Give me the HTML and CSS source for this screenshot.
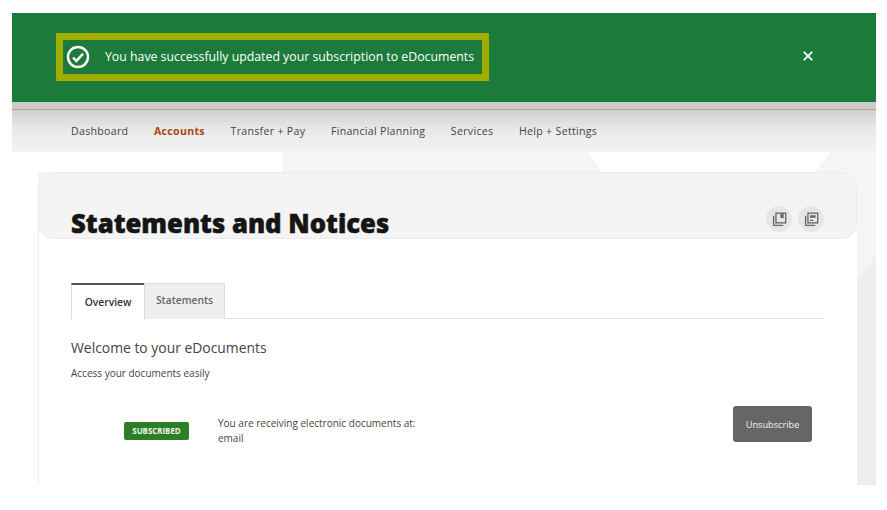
FILE: index.html
```html
<!DOCTYPE html>
<html lang="en">
<head>
  <meta charset="UTF-8" />
  <title>Statements and Notices</title>
  <link rel="stylesheet" href="styles.css">
</head>
<body>
  <div class="page">
    <div class="banner">
      <div class="banner-msg">
        <svg class="check-icon" viewBox="0 0 24 24" width="24" height="24" fill="none" stroke="#fff">
          <circle cx="12" cy="12" r="10" stroke-width="2.4" />
          <path d="M7 12.5l3.4 3.4L17 8.8" stroke-width="2.4" />
        </svg>
        <span>You have successfully updated your subscription to eDocuments</span>
      </div>
      <button class="banner-close" aria-label="Close">
        <svg viewBox="0 0 10 10" width="10" height="10" stroke="#fff" stroke-width="1.9">
          <path d="M.8.8l8.4 8.4M9.2.8L.8 9.2" />
        </svg>
      </button>
    </div>

    <nav class="nav">
      <a href="#">Dashboard</a>
      <a href="#" class="active">Accounts</a>
      <a href="#">Transfer + Pay</a>
      <a href="#">Financial Planning</a>
      <a href="#">Services</a>
      <a href="#">Help + Settings</a>
    </nav>

    <main class="content">
      <div class="decor decor-left"></div>
      <div class="decor decor-right"></div>
      <div class="decor decor-corner"></div>

      <section class="card">
        <div class="card-head">
          <h1>Statements and Notices</h1>
          <div class="head-icons">
            <span class="round-icon">
              <svg viewBox="0 0 16 16" width="15" height="15" fill="none" stroke="#666" stroke-width="1.4">
                <path d="M1.7 4v10.3H12" />
                <rect x="4.2" y="1.2" width="10.4" height="10.4" />
                <path d="M9 1.5v5h3.5v-5" fill="#666" stroke="none" />
              </svg>
            </span>
            <span class="round-icon">
              <svg viewBox="0 0 16 16" width="15" height="15" fill="none" stroke="#666" stroke-width="1.4">
                <path d="M1.7 4v10.3H12" />
                <rect x="4.2" y="1.2" width="10.4" height="10.4" />
                <path d="M6.4 3.4h6v2.6h-6zM6.4 8.3h3.4v1.2h-3.4z" fill="#666" stroke="none" />
              </svg>
            </span>
          </div>
        </div>

        <div class="card-body">
          <div class="tabs">
            <div class="tab tab-active">Overview</div>
            <div class="tab">Statements</div>
          </div>

          <h2>Welcome to your eDocuments</h2>
          <p class="sub">Access your documents easily</p>

          <div class="sub-row">
            <span class="badge">SUBSCRIBED</span>
            <p class="sub-text">You are receiving electronic documents at:<br>email</p>
            <button class="btn">Unsubscribe</button>
          </div>
        </div>
      </section>
    </main>
  </div>
</body>
</html>
```

FILE: styles.css
```css
* { box-sizing: border-box; }
html, body { height: 100%; }
body { margin: 0; background: #fff; font-family: "Open Sans", "Noto Sans", sans-serif; color: #444; overflow: hidden; }

.page { width: 864px; height: 472px; margin: 13px 0 0 12px; display: flex; flex-direction: column; overflow: hidden; }

.banner { height: 89px; flex: none; background: #1c7b3a; display: flex; align-items: center; justify-content: space-between; padding: 0 63px 2px 44px; }
.banner-msg { width: 433px; height: 48px; border: 7px solid #9fae00; display: flex; align-items: center; padding-left: 3px; gap: 15px; color: #fff; font-size: 12.3px; white-space: nowrap; }
.check-icon { flex: none; }
.banner-close { background: none; border: 0; padding: 0; display: flex; margin-bottom: 1px; }

.nav { height: 50px; flex: none; display: flex; align-items: center; gap: 25.6px; padding: 8px 0 0 59px; font-size: 10.6px; letter-spacing: 0.3px; background: linear-gradient(#cdcdcd 0, #cdcdcd 7px, #c39d8c 7px, #c39d8c 8px, #d0d0d0 8px, #e9e9e9 28px, #f3f3f3 50px); }
.nav a { color: #444; text-decoration: none; }
.nav a.active { color: #a9480f; font-weight: 700; }

.content { flex: 1; position: relative; background: #f5f5f5; padding: 20px 19px 0 26px; }
.decor { position: absolute; }
.decor-left { left: 0; top: 0; width: 270px; height: 100%; background: #fff; clip-path: polygon(0 0, 100% 0, 100% 20px, 26px 20px, 26px 100%, 0 100%); }
.decor-right { left: 576px; top: 0; width: 242px; height: 20px; background: #fff; clip-path: polygon(0 0, 100% 0, 94% 100%, 6% 100%); }
.decor-corner { right: 0; top: 103px; width: 19px; height: 230px; background: #eee; clip-path: polygon(0 26px, 100% 0, 100% 100%, 0 100%); }

.card { position: relative; height: 100%; background: #fff; border-left: 1px solid #ececec; border-radius: 16px 16px 0 0; }
.card-head { height: 67px; margin-left: -1px; background: #f4f4f4; border: 1px solid #ebebeb; border-radius: 16px; display: flex; justify-content: space-between; align-items: flex-end; padding: 0 32px 0 32px; }
.card-head h1 { margin: 0 0 -3px; font-family: "Noto Sans", "Open Sans", sans-serif; font-size: 25.7px; line-height: 34px; font-weight: 900; color: #151515; -webkit-text-stroke: 0.5px #151515; }
.head-icons { display: flex; gap: 6px; margin-bottom: 6px; }
.round-icon { width: 26px; height: 26px; border-radius: 50%; background: #e6e6e6; display: flex; align-items: center; justify-content: center; }

.card-body { padding: 44px 33px 0 32px; }
.tabs { display: flex; height: 36px; border-bottom: 1px solid #dedede; }
.tab { width: 81px; height: 36px; background: #efefef; border: 1px solid #dcdcdc; border-bottom: 0; font-size: 10.3px; font-weight: 600; color: #666; text-align: center; line-height: 32px; }
.tab-active { width: 73px; background: #fff; border-top: 2px solid #555; border-right: 0; color: #333; line-height: 34px; }

.card-body h2 { margin: 19px 0 0; font-size: 13.9px; line-height: 20px; font-weight: 400; color: #444; }
.sub { margin: 8px 0 0; font-size: 10px; line-height: 14px; color: #444; }

.sub-row { display: flex; align-items: flex-start; margin-top: 26px; padding: 0 12px 0 53px; }
.badge { width: 65px; height: 18px; margin-top: 16px; background: #2e7d27; border-radius: 2px; color: #eef6ea; font-size: 7.9px; font-weight: 700; line-height: 18px; text-align: center; margin-right: 29px; }
.sub-text { margin: 10px 0 0; flex: 1; font-size: 10px; line-height: 15px; color: #444; }
.btn { width: 79px; height: 36px; background: #666; color: #f4f4f4; border: 0; border-radius: 3px; font-family: inherit; font-size: 9.2px; padding: 0; }
```
